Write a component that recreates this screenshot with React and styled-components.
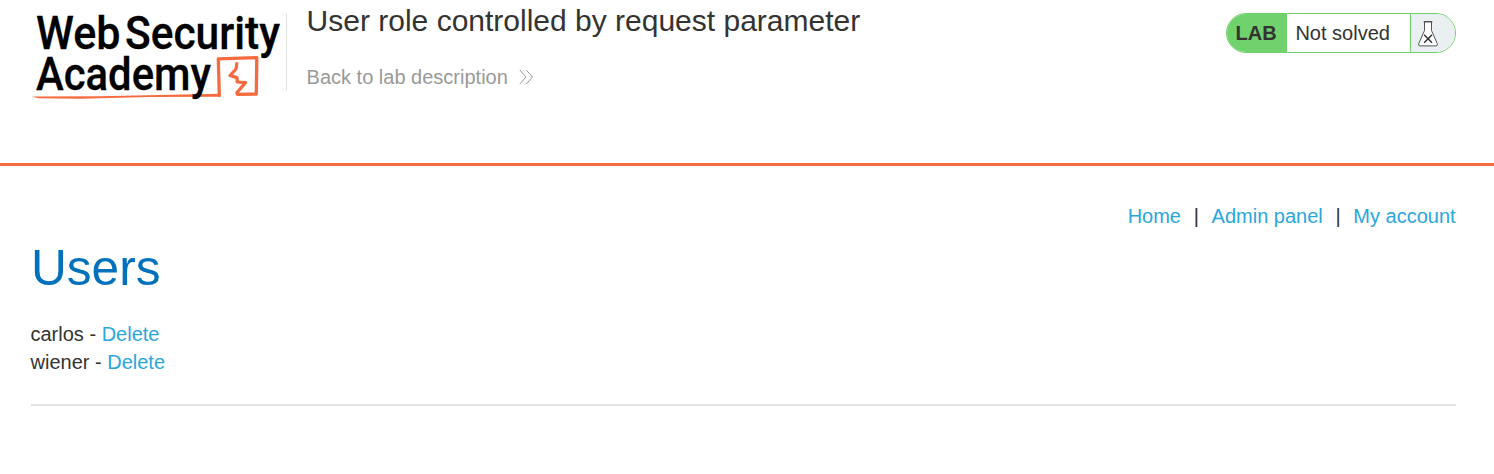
import React from "react";
import styled, { createGlobalStyle } from "styled-components";

const GlobalStyle = createGlobalStyle`
  * { box-sizing: border-box; }
  body {
    margin: 0;
    background: #fff;
    color: #333332;
    font: 20px/28px "Liberation Sans", Arial, sans-serif;
  }
`;

const Header = styled.header`
  display: flex;
  align-items: flex-start;
  height: 166px;
  padding: 0 38px 0 31px;
  border-bottom: 3px solid #f56a3e;
`;

const Logo = styled.svg`
  display: block;
  flex: none;
  width: 255px;
  height: 110px;
  overflow: visible;
`;

const TitleBlock = styled.div`
  flex: 1;
  height: 78px;
  margin-top: 13px;
  padding-left: 19.6px;
  border-left: 1px solid #e4e4e4;
`;

const Title = styled.h2`
  margin: -10px 0 24px;
  font-size: 30px;
  font-weight: 400;
  line-height: 36px;
  white-space: nowrap;
`;

const BackLink = styled.a`
  display: flex;
  align-items: center;
  gap: 11px;
  color: #999;
  text-decoration: none;
`;

const Status = styled.div`
  display: flex;
  width: 230px;
  height: 40px;
  margin-top: 13px;
  overflow: hidden;
  border: 1px solid #73cf6e;
  border-radius: 20px;
  line-height: 38px;
`;

const StatusLabel = styled.span`
  width: 60px;
  padding-left: 8.6px;
  background: #70d26c;
  font-weight: 700;
`;

const StatusText = styled.span`
  flex: 1;
  padding-left: 8.4px;
`;

const StatusIcon = styled.span`
  width: 45px;
  padding: 7px 0 0 7px;
  border-left: 1px solid #73cf6e;
  background: #eaeff2;
  line-height: 0;
`;

const Main = styled.main`
  padding: 36px 38px 0 31px;
`;

const Nav = styled.nav`
  display: flex;
  justify-content: flex-end;
  gap: 12.7px;
  margin-right: 0.4px;
`;

const Link = styled.a`
  color: #29a7dc;
  text-decoration: none;
`;

const Heading = styled.h1`
  margin: 8px 0 22px;
  color: #0071bc;
  font-size: 49.6px;
  font-weight: 400;
  line-height: 60px;
`;

const UserRow = styled.div`
  height: 28px;
  margin-left: -0.5px;
`;

const Divider = styled.hr`
  height: 2px;
  margin: 28px 0 0;
  border: 0;
  background: #e4e4e4;
`;

const logoText = {
  fontFamily: "Roboto, sans-serif",
  fontSize: 46.5,
  fontWeight: 500,
  lengthAdjust: "spacingAndGlyphs",
  stroke: "#000",
  strokeWidth: 0.3,
};

function AcademyLogo() {
  return (
    <Logo viewBox="31 0 255 110" role="img" aria-label="Web Security Academy">
      <g fill="none" stroke="#f56a3e" strokeLinejoin="round" strokeLinecap="round">
        <path d="M219.3 95.5 218.3 58.8 256.8 57.6 256.3 94 237.5 94.4" strokeWidth="3.3" />
        <path d="M236.8 63.5 236 69 230 75.5 237 77.6 237.2 82 245.5 82.6 236.8 92.8" strokeWidth="3.2" />
      </g>
      <path d="M32 96.5 100 96.2 219 93.8V96.8L150 97 80 98.8 38 98.2Z" fill="#f56a3e" />
      <text x="36" y="49" textLength="84.5" {...logoText}>Web</text>
      <text x="125" y="49" textLength="155" {...logoText}>Security</text>
      <text x="36" y="90" textLength="175" {...logoText}>Academy</text>
    </Logo>
  );
}

function Chevrons() {
  return (
    <svg width="15" height="16" viewBox="0 0 15 16" fill="none" stroke="#999" strokeWidth="1">
      <path d="M.8 1 7 8 .8 15M7.3 1 13.5 8 7.3 15" />
    </svg>
  );
}

function Flask() {
  return (
    <svg width="20" height="26" viewBox="0 0 20 26" fill="#fff" stroke="#555" strokeWidth="1">
      <path d="M6.5 1V9.5L.8 22.5Q0 24.7 2 24.9H18Q20 24.7 19.2 22.5L13.5 9.5V1" />
      <path d="M5.7 .8H14.3" strokeWidth="1.4" />
      <path d="M6.2 13.8 14 21.7M14 13.8 6.2 21.7" stroke="#333" strokeWidth="1.5" />
    </svg>
  );
}

const users = ["carlos", "wiener"];

export default function App() {
  return (
    <>
      <GlobalStyle />
      <Header>
        <AcademyLogo />
        <TitleBlock>
          <Title>User role controlled by request parameter</Title>
          <BackLink>
            Back to lab description
            <Chevrons />
          </BackLink>
        </TitleBlock>
        <Status>
          <StatusLabel>LAB</StatusLabel>
          <StatusText>Not solved</StatusText>
          <StatusIcon><Flask /></StatusIcon>
        </Status>
      </Header>
      <Main>
        <Nav>
          <Link>Home</Link>
          <span>|</span>
          <Link>Admin panel</Link>
          <span>|</span>
          <Link>My account</Link>
        </Nav>
        <Heading>Users</Heading>
        {users.map((name) => (
          <UserRow key={name}>
            {name} - <Link>Delete</Link>
          </UserRow>
        ))}
        <Divider />
      </Main>
    </>
  );
}
